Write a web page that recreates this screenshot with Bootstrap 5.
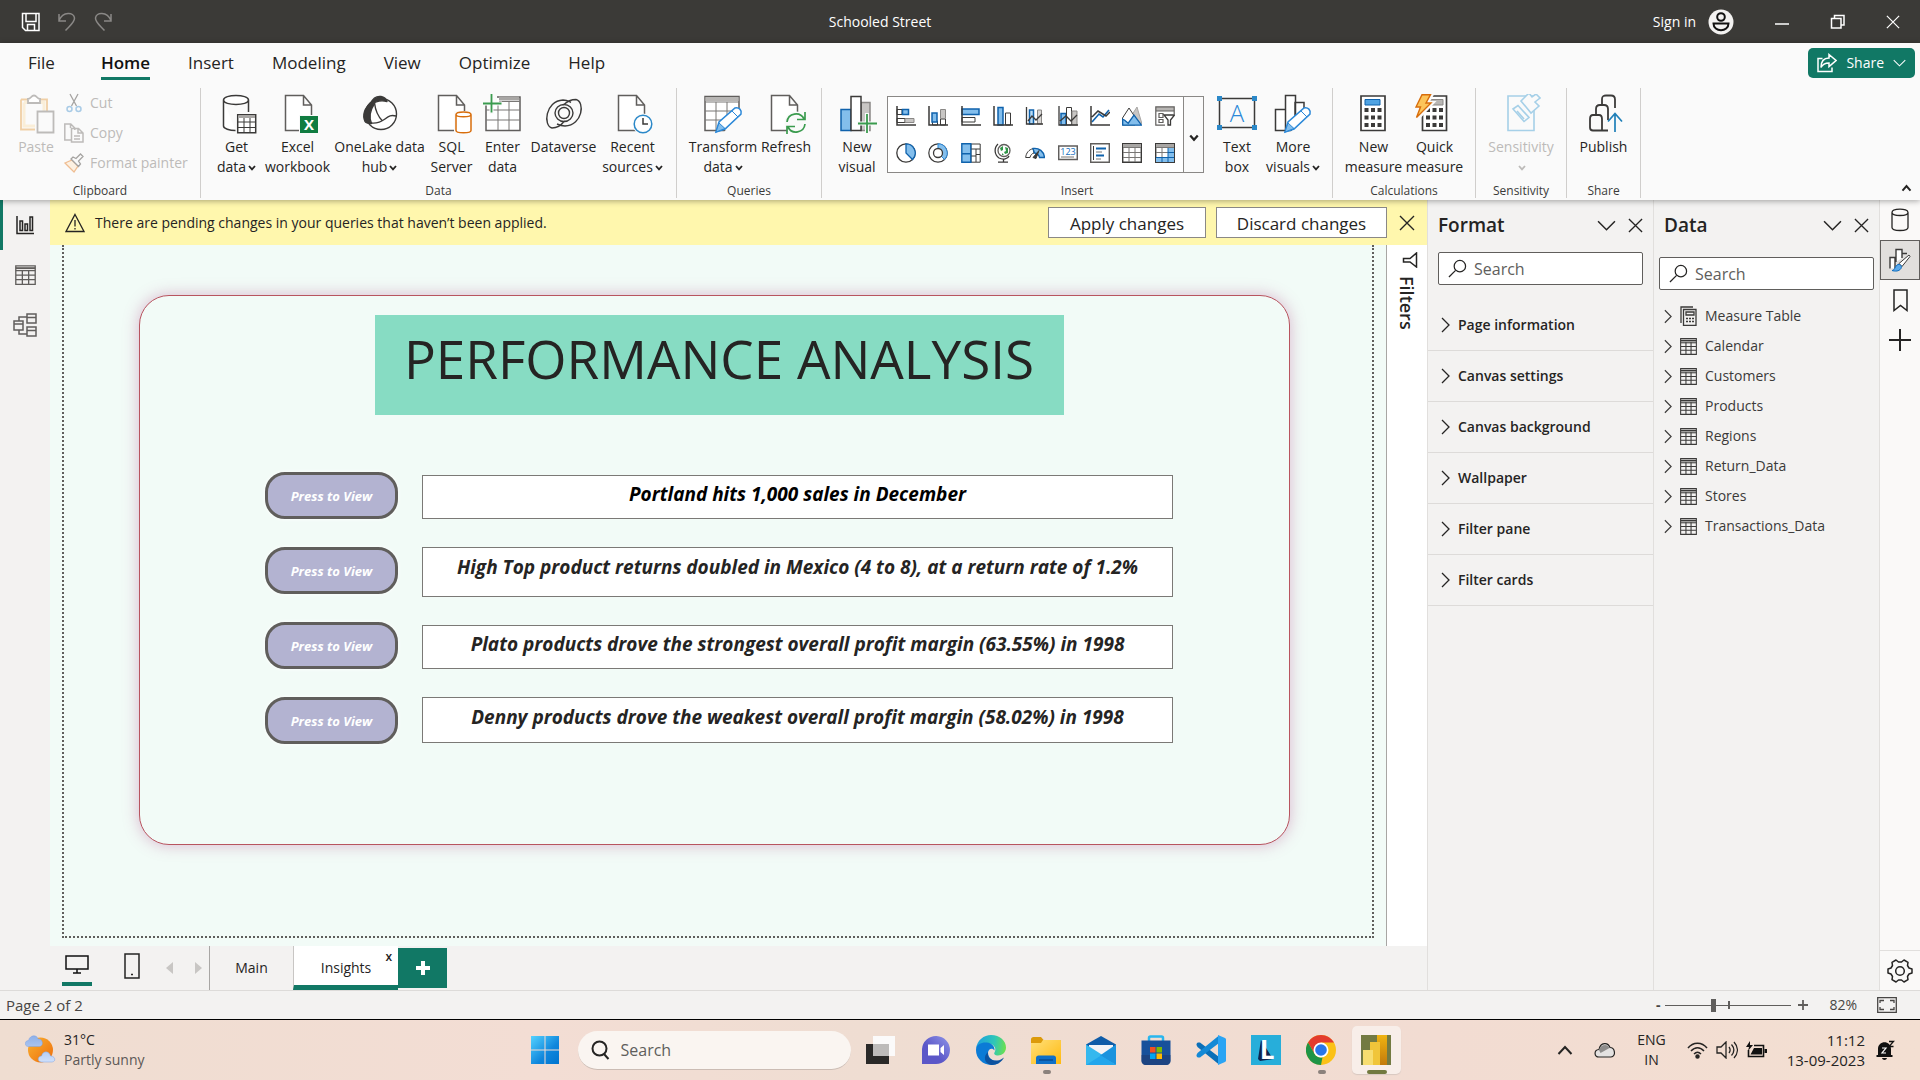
<!DOCTYPE html>
<html lang="en">
<head>
<meta charset="utf-8">
<meta name="viewport" content="width=device-width, initial-scale=1">
<title>Schooled Street</title>
<link href="https://cdn.jsdelivr.net/npm/bootstrap@5.3.0/dist/css/bootstrap.min.css" rel="stylesheet">
<style>
:root{--teal:#117865;--ink:#252423}
body{font-family:"Open Sans","Noto Sans",sans-serif;font-size:14px;line-height:20px;color:var(--ink);background:#f3f2f1;min-height:100vh}
button{color:inherit;background:none;border:0;padding:0}
svg{flex:none;display:block}
.ic{fill:none;stroke:currentColor;stroke-width:1.5}
.thin{stroke-width:1.3}
.heavy{stroke-width:2}
.side-cell{flex:1 1 0}
/* title bar */
.titlebar{height:43px;background:#3b3a37;color:#fff;padding:0 20px 0 21px}
.doc-name{margin-right:161px}
.dim{color:#8a8886}
.win-btn{margin-left:40px}
/* ribbon */
.ribbon{background:#fafafa;box-shadow:0 1px 6px rgba(0,0,0,.35);z-index:2;position:relative}
.tabs-row{height:43px;padding:5px 5px 0 28px;gap:38px}
.rtab{font-size:17px;line-height:24px;color:var(--ink);text-decoration:none;border-bottom:3px solid transparent;padding:3px 0 2px}
.rtab:first-child{margin-right:8px}
.rtab.on{font-weight:600;border-color:var(--teal);color:#111}
.share-btn{background:var(--teal);color:#fff;border-radius:5px;height:30px;padding:0 9px;gap:9px}
.rbody{height:114px}
.rgroup{border-right:1px solid #d0cecc;margin-top:2px;margin-bottom:2px;padding-top:6px}
.glabel{font-size:12px;line-height:15px;color:#3b3a39}
.rbtn{color:var(--ink);text-align:center;line-height:20px;white-space:nowrap}
.rbtn svg{margin:0 auto 3px}
.w46{width:46px}.w52{width:52px}.w56{width:56px}.w61{width:61px}.w66{width:66px}.w72{width:72px}.w74{width:74px}.w98{width:98px}
.g-clip{width:201px}.g-data{width:476px}.g-query{width:145px}.g-insert{width:511px;}.g-calc{width:143px}.g-sens{width:91px}.g-share{width:74px}
.insert-row{padding-left:7px}
.off{color:#bdbbb9}
.clip-cmds{margin-top:-6px}
.small-cmd{height:30px;gap:6px}
.gallery{border:1px solid #8a8886;background:#fff;height:77px;width:317px;margin:2px 1px 0 2px}
.gal-grid{display:grid;grid-template-columns:repeat(9,1fr);flex:1;padding:0 2px}
.gal-grid button{display:grid;place-items:center}
.gal-more{width:20px;border-left:1px solid #8a8886;background:#fafafa;display:grid;place-items:center;padding-top:7px}
.rbtn .caret{display:inline-block;vertical-align:middle;margin:0 0 0 2px}
/* work area */
.leftnav{width:50px;color:#605e5c}
.leftnav button{height:50px;display:grid;place-items:center;border-left:3px solid transparent;padding-right:3px}
.leftnav button.on{border-color:var(--teal);color:#252423}
.notice{height:45px;background:#fff7ad;padding:0 12px 0 15px}
.notice-text{margin:1px auto 0 10px}
.plain-btn{background:#fff;border:1px solid #8a8886;width:158px;height:31px;font-size:17px;line-height:28px;padding:2px 0 0}
.plain-btn.wide{width:171px;margin:0 12px 0 10px}
.canvas-area{background:#f2fbf7;padding:0 12px 8px}
.page-frame{border:2px dotted #605e5c;border-top:0;padding:50px 82px 91px 75px}
.sheet{border:1px solid #b8545f;border-radius:30px;box-shadow:0 0 16px rgba(170,60,130,.35);background:#f2fbf7;padding:19px 116px 0 125px}
.banner{background:#87dcc3;width:689px;height:100px;margin:0 auto 57px;font-size:53px;line-height:88px;font-weight:400;text-align:center;white-space:nowrap}
.insight{height:75px;gap:24px}
.press{width:133px;height:47px;flex:none;border:3px solid #605e5c;border-radius:20px;background:#b3b3d1;color:#fff;font-weight:700;font-style:italic;font-size:13px;box-shadow:0 0 4px #fff}
.fact{flex:1;background:#fff;border:1px solid #7b7976;font-weight:700;font-style:italic;font-size:19px;line-height:37px;text-align:center;height:44px;margin-top:3px;white-space:nowrap}
.fact.tall{height:50px;line-height:39px;margin-top:0}
.fact.raised{height:46px;line-height:39px;margin-top:0}
.filters{width:41px;background:#fff;border-left:1px solid #a8a6a4;padding:7px 0 0 5px}
.filters span{writing-mode:vertical-rl;font-weight:600;font-size:18px;line-height:24px;margin-right:5px}
.pane{width:226px;border-left:1px solid #e1dfdd}
.pane h2{font-size:19px;line-height:26px;font-weight:600;margin:0}
.pane-head{height:50px;padding:0 10px}
.find{background:#fff;border:1px solid #605e5c;border-radius:2px;height:33px;padding:0 9px;gap:7px;margin:2px 10px 15px}
.find.data-find{margin:7px 5px 11px}
.find input,.os-find input{border:0;outline:0;min-width:0;flex:1;background:none;font-size:16px;padding:0;color:var(--ink)}
.find input::placeholder,.os-find input::placeholder{color:#605e5c;opacity:1}
.sec{height:51px;width:100%;border-bottom:1px solid #dddbd9;font-weight:600;padding:0 13px;gap:8px}
.tree button{height:30px;width:100%;padding-left:10px;gap:8px;color:#3b3a39}
.strip{width:41px;background:#faf9f8;border-left:1px solid #e1dfdd}
.strip button{height:40px;width:40px;display:grid;place-items:center}
.strip button.on{background:#e1dfdd;border:1px solid #605e5c}
.strip .gear-cell{border-top:1px solid #e1dfdd}
/* page tabs */
.pagebar{height:44px;padding-left:62px}
.dev{width:30px;height:40px;margin-right:25px}
.dev.on{border-bottom:4px solid var(--teal);color:#111}
.pager{color:#c8c6c4;gap:22px;margin:0 7px 0 -6px}
.ptab{width:84px;line-height:44px;color:var(--ink);text-decoration:none;text-align:center;border-left:1px solid #a8a6a4}
.ptab.on{width:105px;background:#fff;border-left-color:#c8c6c4;border-bottom:5px solid var(--teal);position:relative}
.tab-x{position:absolute;top:3px;right:6px;font-size:12px;line-height:16px;font-weight:600}
.add-page{width:49px;height:40px;background:var(--teal);color:#fff;margin-top:2px;display:grid;place-items:center}
.statusbar{height:29px;border-top:1px solid #dddbd9;color:#484644;padding:0 23px 0 6px}
.page-no{font-size:15px}
.zoom-val{margin:0 20px 0 21px}
.zoomer{appearance:none;width:126px;height:14px;margin:0 7px 0 5px;background:linear-gradient(#605e5c,#605e5c) 63px 50%/2px 8px no-repeat,linear-gradient(#605e5c,#605e5c) center/100% 1px no-repeat}
.zoomer::-webkit-slider-thumb{appearance:none;width:5px;height:13px;background:#605e5c;border:0}
/* taskbar */
.taskbar{height:61px;border-top:1px solid #000;background:linear-gradient(90deg,#efddd1,#f3ddd4 28%,#efddd2 45%,#f2dcd2 75%,#f3dfd2);padding:0 25px}
.muted-ink{color:#5c5856}
.apps{margin-left:13px}
.os-find{width:273px;height:39px;border-radius:20px;background:#faf5f1;border-bottom:1px solid #cbbcb4;padding:0 12px;margin:0 3px 0 18px;gap:11px}
.app{width:55px;height:48px;display:grid;place-items:center;position:relative}
.app.run::after{content:"";position:absolute;bottom:0;left:24px;width:8px;height:4px;border-radius:2px;background:#8b817c}
.app.cur::before{content:"";position:absolute;inset:0 3px;border-radius:5px;background:#f8eee9;box-shadow:0 1px 1px #d8c8c0}
.app.cur::after{left:18px;width:20px;background:#72793f}
.app svg{position:relative}
.tray{gap:8px}
.tray-cloud,.tray-lang{margin:0 13px}
.clock{font-size:15px;margin:0 3px 0 12px}
</style>
</head>
<body class="d-flex flex-column m-0">
<svg width="0" height="0" class="position-absolute" aria-hidden="true">
<defs>
<symbol id="chev" viewBox="0 0 18 10"><path d="M1 1l8 8 8-8" fill="none" stroke="currentColor" stroke-width="1.4"/></symbol>
<symbol id="cross" viewBox="0 0 16 16"><path d="M1 1l14 14M15 1L1 15" fill="none" stroke="currentColor" stroke-width="1.4"/></symbol>
<symbol id="right" viewBox="0 0 9 16"><path d="M1 1l7 7-7 7" fill="none" stroke="currentColor" stroke-width="1.3"/></symbol>
<symbol id="caret" viewBox="0 0 8 6"><path d="M1 1l3 3.4L7 1" fill="none" stroke="currentColor" stroke-width="1.8"/></symbol>
<symbol id="lens" viewBox="0 0 20 20"><g fill="none" stroke="currentColor" stroke-width="1.3"><circle cx="12.5" cy="7.5" r="6"/><path d="M8 12l-7 7"/></g></symbol>
<symbol id="grid" viewBox="0 0 16 16"><g fill="none" stroke="currentColor"><path d="M.6.6h14.8v14.800H.6zM.6 8h14.800M.6 11.600h14.800M5.600 4v11.400M10.400 4v11.400"/><path d="M.6 2.500h14.800" stroke-width="1.500"/><path d="M.6 4.500h14.800"/></g></symbol>
<symbol id="page" viewBox="0 0 40 40"><path d="M7.500 1.500h18l8 9.500v25.500h-26zM25.500 1.500V11h8" fill="#fff" stroke="#605e5c" stroke-width="1.5"/></symbol>
</defs>
</svg>

<header class="titlebar d-flex align-items-center">
  <div class="side-cell d-flex gap-3">
    <button aria-label="Save"><svg width="20" height="20" class="ic"><path d="M1.500 1.500h16.500v17H4.500l-3-3zM5 1.500v8h10v-8M6.500 18.500v-6h7v6"/></svg></button>
    <button class="dim" aria-label="Undo"><svg width="20" height="20" class="ic"><path d="M2 2v7h7M2 8.500C6-1 17 0 17.500 6c.3 4-4 7-9 12.500"/></svg></button>
    <button class="dim" aria-label="Redo"><svg width="20" height="20" class="ic"><path d="M18 2v7h-7M18 8.500C14-1 3 0 2.500 6c-.3 4 4 7 9 12.500"/></svg></button>
  </div>
  <span class="doc-name">Schooled Street</span>
  <div class="side-cell d-flex justify-content-end align-items-center">
    <button class="d-flex align-items-center gap-2 me-n1"><span class="me-1">Sign in</span><svg width="26" height="26"><circle cx="13" cy="13" r="12.500" fill="#f3f2f1"/><g fill="none" stroke="#111" stroke-width="2"><circle cx="13" cy="8" r="3.800"/><path d="M5.500 14.500h15c0 9-15 9-15 0z"/></g></svg></button>
    <button class="win-btn" aria-label="Minimize"><svg width="16" height="16" class="ic"><path d="M1 10h14"/></svg></button>
    <button class="win-btn" aria-label="Restore"><svg width="16" height="16" class="ic"><path d="M1.500 4.500h9.500V14H1.500zM4.500 4V1.500H14V11h-3"/></svg></button>
    <button class="win-btn" aria-label="Close"><svg width="14" height="14"><use href="#cross"/></svg></button>
  </div>
</header>

<section class="ribbon">
  <nav class="tabs-row d-flex align-items-start">
    <a class="rtab" href="#">File</a>
    <a class="rtab on" href="#">Home</a>
    <a class="rtab" href="#">Insert</a>
    <a class="rtab" href="#">Modeling</a>
    <a class="rtab" href="#">View</a>
    <a class="rtab" href="#">Optimize</a>
    <a class="rtab" href="#">Help</a>
    <button class="share-btn ms-auto d-flex align-items-center"><svg width="20" height="20" class="ic"><path d="M5.500 5.500H1v13h14v-4M12 1.500l7 6-7 6v-3.500c-4 0-6.500 1.500-8 4.500 0-6 3-9.500 8-9.500z"/></svg><span>Share</span><svg width="13" height="8" class="ms-n1"><use href="#chev"/></svg></button>
  </nav>
  <div class="rbody d-flex">
    <div class="rgroup g-clip d-flex flex-column">
      <div class="d-flex flex-grow-1 off ps-2">
        <button class="rbtn w56 off align-self-start"><svg width="40" height="40"><g fill="none" stroke-width="1.800"><path d="M5 5.500h26V17M19 35.500H5v-30" stroke="#f0cfa5"/><path d="M8 8.500h20V17M19 32H8V8.500" stroke="#faeed8" stroke-width="3"/><path d="M12 9V5c3 0 3-3.500 6-3.500S21 5 24 5v4z" fill="#fff" stroke="#bdbbb9"/><path d="M21.500 17.500h16v21h-16z" fill="#fafafa" stroke="#bdbbb9"/></g></svg>Paste</button>
        <div class="clip-cmds d-flex flex-column">
          <button class="small-cmd off d-flex align-items-center"><svg width="20" height="20"><path d="M6 1l6.500 12M14 1L7.500 13" stroke="#a5a3a1" stroke-width="1.300"/><g fill="none" stroke="#a9cbe6" stroke-width="1.500"><circle cx="5.500" cy="16" r="2.500"/><circle cx="14.500" cy="16" r="2.500"/></g></svg>Cut</button>
          <button class="small-cmd off d-flex align-items-center"><svg width="20" height="20" class="ic"><path d="M7 17H.8V1h6l4 4v2M6.500 1v4M7.500 5.500h7l4.500 4.500v9H7.500zM14 5.500V10h5M10 13h6M10 16h6"/></svg>Copy</button>
          <button class="small-cmd off d-flex align-items-center"><svg width="20" height="20"><path d="M1 10l7-3 6 6-4 6z" fill="#fdf1e2" stroke="#efbd92" stroke-width="1.300"/><path d="M7 6l7.500 7.500 2-2.500-2-3L19 3.500 16.500 1 12 5.500 9 4z" fill="#fafafa" stroke="#a5a3a1" stroke-width="1.300"/></svg>Format painter</button>
        </div>
      </div>
      <div class="glabel text-center">Clipboard</div>
    </div>

    <div class="rgroup g-data d-flex flex-column">
      <div class="d-flex flex-grow-1 justify-content-center align-items-start">
        <button class="rbtn w56"><svg width="40" height="40"><g fill="#fff" stroke="#3b3a39" stroke-width="1.500"><path d="M6.500 6v26c0 2.500 6 4.500 12 4.500M31.500 6v12M6.500 6c0-6 25-6 25 0s-25 6-25 0z"/><path d="M20.700 20.700h18v18h-18z"/><path d="M20.700 28h18M20.700 33.500h18M27 24v15M33 24v15" stroke-width="1"/><path d="M21.500 22.500h16.500" stroke="#a8a6a4" stroke-width="3"/></g></svg>Get<br>data<svg class="caret" width="8" height="6"><use href="#caret"/></svg></button>
        <button class="rbtn w66"><svg width="40" height="40"><use href="#page"/><path d="M21 21h19v19H21z" fill="#fafafa"/><path d="M22 22h18v17H22z" fill="#107c41"/><text x="31" y="36" font-size="15" font-weight="700" fill="#fff" text-anchor="middle">X</text></svg>Excel<br>workbook</button>
        <button class="rbtn w98"><svg width="40" height="40"><g stroke="#3b3a39" stroke-width="1.400" stroke-linejoin="round"><circle cx="21" cy="20" r="15.500" fill="#fff"/><path d="M11 9C13 4 17 2 21 2.500c3 .5 5 2 6 5-6-1.500-11-.5-16 3z" fill="#3b3a39"/><path d="M11 9c-6 4-9 12-6 18.500 1 2 3 2 6.500 2-3-7-1-14 3-20z" fill="#3b3a39"/><path d="M14.500 9c1 8 3 13 8 18M11 29c5 .5 10-1 14-4 4-3 6-4.500 11-3" fill="none"/></g></svg>OneLake data<br>hub<svg class="caret" width="8" height="6"><use href="#caret"/></svg></button>
        <button class="rbtn w46"><svg width="40" height="40"><use href="#page" x="-1"/><path d="M22 17h18v23H22z" fill="#fafafa"/><path d="M24 20.500v16c0 3 15 3 15 0v-16c0-3.500-15-3.500-15 0 0 3 15 3 15 0" fill="#fff" stroke="#d86d0b" stroke-width="1.500"/></svg>SQL<br>Server</button>
        <button class="rbtn w56"><svg width="40" height="40"><path d="M3 3h34v33.500H3z" fill="#fff" stroke="#605e5c" stroke-width="1.500"/><path d="M16 4.500h20" stroke="#a8a6a4" stroke-width="4"/><path d="M3 16h34M3 26h34M15 8v28M26 8v28M16 7.500h21" stroke="#797775" fill="none"/><path d="M0 0h14v10H0z" fill="#fafafa"/><path d="M8.500 0v20M0 9.500h19" stroke="#fafafa" stroke-width="4"/><path d="M8.500 0v18.500M0 9.500h18.500" stroke="#3a9b4e" stroke-width="1.800"/></svg>Enter<br>data</button>
        <button class="rbtn w66"><svg width="40" height="40"><g fill="none" stroke="#3b3a39" stroke-width="1.400"><circle cx="20" cy="19" r="5.500"/><path d="M20 10.500c-5 0-9 4-9 8.500s4 8.500 9 8.500c-3 4-8 6.500-12 6.500C-1 32 1 7 19 6c4 0 6 1.500 8 2.500"/><path d="M20 27.500c5 0 9-4 9-8.500s-4-8.500-9-8.500c3-3 8-5 12-5C41 7.500 39 31 21 32c-4 0-6-1-8-2"/></g></svg>Dataverse</button>
        <button class="rbtn w72"><svg width="40" height="40"><use href="#page" x="-2"/><circle cx="30" cy="30" r="10.500" fill="#fafafa"/><circle cx="30" cy="30" r="8.800" fill="#fff" stroke="#2b88c8" stroke-width="1.500"/><path d="M30 24v6h5" fill="none" stroke="#3b3a39" stroke-width="1.500"/></svg>Recent<br>sources<svg class="caret" width="8" height="6"><use href="#caret"/></svg></button>
      </div>
      <div class="glabel text-center">Data</div>
    </div>

    <div class="rgroup g-query d-flex flex-column">
      <div class="d-flex flex-grow-1 justify-content-center align-items-start">
        <button class="rbtn w74"><svg width="40" height="40"><path d="M2 2.500h34v34H2z" fill="#fff" stroke="#605e5c" stroke-width="1.500"/><path d="M2.500 5h33" stroke="#b8b6b4" stroke-width="4"/><path d="M2 8h34M2 17h34M2 26h34M13 8v28M24 8v28" stroke="#797775" fill="none"/><path d="M37 14h3v26H20z" fill="#fafafa"/><path d="M13 38l3-10 16-14c4-1 7 2 6 6L22 35z" fill="#fff" stroke="#2b88d8" stroke-width="1.500"/><path d="M13 38l3-9 6 5.500z" fill="#83beec" stroke="#2b88d8"/><path d="M29 17l6 6" stroke="#2b88d8"/></svg>Transform<br>data<svg class="caret" width="8" height="6"><use href="#caret"/></svg></button>
        <button class="rbtn w52"><svg width="40" height="40"><use href="#page" x="-2"/><circle cx="30" cy="29" r="11.500" fill="#fafafa"/><g fill="none" stroke="#3a9b4e" stroke-width="1.700"><path d="M21 28c1-9 13-11 17-3M39 18v7.500h-8M39 30c-1 9-13 11-17 3M21 40v-7.500h8"/></g></svg>Refresh</button>
      </div>
      <div class="glabel text-center">Queries</div>
    </div>

    <div class="rgroup g-insert d-flex flex-column">
      <div class="insert-row d-flex flex-grow-1 align-items-start">
        <button class="rbtn w56"><svg width="40" height="40"><path d="M4 15.500h10v21H4z" fill="#83beec" stroke="#0f62ac" stroke-width="1.500"/><path d="M24 8.500h9v28h-9z" fill="#c8c6c4" stroke="#8a8886" stroke-width="1.500"/><path d="M14 2.500h10v34H14z" fill="#fff" stroke="#3b3a39" stroke-width="1.500"/><path d="M30 19v20M20 29.500h20" stroke="#fafafa" stroke-width="4"/><path d="M30 20v19M21 29.500h19" stroke="#3a9b4e" stroke-width="1.800"/></svg>New<br>visual</button>
        <div class="gallery d-flex">
          <div class="gal-grid">
            <button aria-label="Stacked bar chart"><svg width="20" height="20"><path d="M1 3.500h5v5H1z" fill="#fff" stroke="#3b3a39"/><path d="M6.500 3.500h6v5h-6z" fill="#83beec" stroke="#0f62ac" stroke-width="1.500"/><path d="M1 12.500h8v4H1z" fill="#fff" stroke="#3b3a39"/><path d="M9 12.500h9v4H9z" fill="#c8c6c4" stroke="#8a8886"/><path d="M1 0v19h19" fill="none" stroke="#3b3a39" stroke-width="1.500"/></svg></button>
            <button aria-label="Stacked column chart"><svg width="20" height="20"><path d="M4.500 15h5v4h-5zM12.500 13h5v6h-5z" fill="#fff" stroke="#3b3a39"/><path d="M4 7h5v9H4z" fill="#83beec" stroke="#0f62ac" stroke-width="1.500"/><path d="M12.500 3.500h5v9h-5z" fill="#c8c6c4" stroke="#8a8886"/><path d="M1 0v19h19" fill="none" stroke="#3b3a39" stroke-width="1.500"/></svg></button>
            <button aria-label="Clustered bar chart"><svg width="20" height="20"><path d="M1 3h17v5.500H1z" fill="#83beec" stroke="#0f62ac" stroke-width="1.500"/><path d="M1 11.500h13v4.500H1z" fill="#fff" stroke="#3b3a39"/><path d="M1 0v19h19" fill="none" stroke="#3b3a39" stroke-width="1.500"/></svg></button>
            <button aria-label="Clustered column chart"><svg width="20" height="20"><path d="M5 1.500h5V19H5z" fill="#83beec" stroke="#0f62ac" stroke-width="1.500"/><path d="M12.500 7h5v12h-5z" fill="#fff" stroke="#3b3a39"/><path d="M1 0v19h19" fill="none" stroke="#3b3a39" stroke-width="1.500"/></svg></button>
            <button aria-label="Line and stacked column chart"><svg width="20" height="20"><path d="M4.500 4h4v14h-4z" fill="#b9dbf5" stroke="#0f62ac" stroke-width="1.500"/><path d="M12.500 4h4v14h-4z" fill="#d8d6d4" stroke="#8a8886"/><path d="M1.500 1v17H18M3 15l4-5 4 4 6-6" fill="none" stroke="#3b3a39" stroke-width="1.300"/></svg></button>
            <button aria-label="Line and clustered column chart"><svg width="20" height="20"><path d="M3 7.500h5V19H3z" fill="#83beec" stroke="#0f62ac" stroke-width="1.500"/><path d="M8.500 1.500h5V19h-5z" fill="#fff" stroke="#3b3a39"/><path d="M14 5h5v14h-5z" fill="#c8c6c4" stroke="#8a8886"/><path d="M1 0v19h19M2 15l6-5 5 5 6-6" fill="none" stroke="#3b3a39" stroke-width="1.300"/></svg></button>
            <button aria-label="Line chart"><svg width="20" height="20"><path d="M2 16L9 8l4 3 6-7" fill="none" stroke="#0f62ac" stroke-width="1.600"/><path d="M1 0v19h19M2 11l6-6 8 5 4-4" fill="none" stroke="#3b3a39" stroke-width="1.500"/></svg></button>
            <button aria-label="Area chart"><svg width="20" height="20"><path d="M8 12l7-11 5 17z" fill="#c8c6c4" stroke="#a8a6a4"/><path d="M.5 12L7 2l6 9v8H.5z" fill="#fff" stroke="#3b3a39"/><path d="M.7 19.200v-6l2 1 3.500 3L12 9l7.500 10.200z" fill="#83beec" stroke="#0f62ac" stroke-width="1.300"/></svg></button>
            <button aria-label="Slicer"><svg width="20" height="20"><path d="M1 1h18v18H1z" fill="#fff"/><path d="M1 3h18" stroke="#b8b6b4" stroke-width="4"/><path d="M19.200 8V.8H.8v18.400H10M1 5h18M4 7.500h4v4H4zM4 13.500h4v3H4z" fill="none" stroke="#605e5c" stroke-width="1.200"/><path d="M9 9h10.500l-4 5v5h-2.500v-5z" fill="#fff" stroke="#3b3a39" stroke-width="1.300"/></svg></button>
            <button aria-label="Pie chart"><svg width="20" height="20"><circle cx="10" cy="10" r="9.200" fill="#fff" stroke="#3b3a39" stroke-width="1.300"/><path d="M10 .8a9.200 9.200 0 0 1 6.500 15.700L10 10z" fill="#83beec" stroke="#0f62ac" stroke-width="1.300"/></svg></button>
            <button aria-label="Donut chart"><svg width="20" height="20"><circle cx="10" cy="10" r="9.200" fill="#fff" stroke="#3b3a39" stroke-width="1.200"/><path d="M10 .8a9.200 9.200 0 0 1 6.500 15.700L13 13a4.500 4.500 0 0 0-3-7.500z" fill="#83beec" stroke="#2b88d8"/><circle cx="10" cy="10" r="4.500" fill="#fff" stroke="#3b3a39" stroke-width="1.300"/></svg></button>
            <button aria-label="Treemap"><svg width="20" height="20"><path d="M10 1h9.200v18.200H10zM10 6h9M15 6v13M10 13h5M15 11.500h4" fill="#fff" stroke="#3b3a39"/><path d="M.8.8h9v10h-9zM.8 10.800h9v8.400h-9z" fill="#83beec" stroke="#0f62ac" stroke-width="1.400"/></svg></button>
            <button aria-label="Map"><svg width="20" height="20"><path d="M5 1a9 9 0 0 0 1 14c4 2 9 1 10-2M10.500 15.500V19M5 19.200h10" fill="none" stroke="#3b3a39" stroke-width="1.300"/><circle cx="11" cy="7.500" r="6" fill="#fff" stroke="#605e5c" stroke-width="1.300"/><path d="M7 5l3-2v4l-2 1zM12 4l3 1v5l-3 1-1-2 2-1zM9 10l2 2H9z" fill="#2f9447"/></svg></button>
            <button aria-label="Gauge"><svg width="20" height="20"><path d="M.7 14.500C1 10 4 6.500 8 5.700L9 10c-2 .5-3.500 2-4 4.500z" fill="#fff" stroke="#3b3a39"/><path d="M8 5.500c6-1 11 3 11.500 9h-5c-.5-3-2-4-5-4.500z" fill="#83beec" stroke="#0f62ac" stroke-width="1.300"/><path d="M8 14.500l6-7-3 8z" fill="#3b3a39" stroke="#3b3a39"/></svg></button>
            <button aria-label="Card"><svg width="20" height="20"><path d="M.7 3h18.600v13.500H.7z" fill="#fff" stroke="#605e5c" stroke-width="1.500"/><text x="10" y="12" font-size="9" fill="#0f6cbd" text-anchor="middle">123</text><path d="M3 14h13" stroke="#797775"/></svg></button>
            <button aria-label="Multi-row card"><svg width="20" height="20"><path d="M.7.700h18.600v18.600H.7z" fill="#fff" stroke="#605e5c" stroke-width="1.400"/><path d="M3.500 3v14" stroke="#3b3a39"/><path d="M6 5.500h10M6 12.500h8" stroke="#0f62ac" stroke-width="2.200"/><path d="M6 9h6M6 16h5" stroke="#797775"/></svg></button>
            <button aria-label="Table"><svg width="20" height="20"><path d="M.7.700h18.600v18.600H.7z" fill="#fff" stroke="#3b3a39" stroke-width="1.400"/><path d="M1 2.500h18" stroke="#a8a6a4" stroke-width="3"/><path d="M1 4.500h18M1 9.500h18M1 14.500h18M7 5v14M13 5v14" stroke="#797775"/></svg></button>
            <button aria-label="Matrix"><svg width="20" height="20"><path d="M.7.700h18.600v18.600H.7z" fill="#fff" stroke="#3b3a39" stroke-width="1.400"/><path d="M13 5h6v14H1v-5h12z" fill="#83beec"/><path d="M1 2.500h18" stroke="#a8a6a4" stroke-width="3"/><path d="M1 4.500h18M1 9.500h12M7 5v9" stroke="#797775"/><path d="M13 5v14M13 9.500h6M1 14.500h18M7 14.500V19" stroke="#0f62ac"/></svg></button>
          </div>
          <button class="gal-more" aria-label="More"><svg width="10" height="8" viewBox="0 0 8 6"><use href="#caret"/></svg></button>
        </div>
        <button class="rbtn w56 mx-1 me-0"><svg width="40" height="40"><path d="M2.500 4.500h35v29h-35z" fill="#fafafa" stroke="#3b3a39" stroke-width="1.500"/><path d="M0 2h5v5H0zM35 2h5v5h-5zM0 31h5v5H0zM35 31h5v5h-5z" fill="#2b88c8"/><text x="20" y="28" font-size="24" fill="#2b88d8" text-anchor="middle" font-weight="300">A</text></svg>Text<br>box</button>
        <button class="rbtn w56"><svg width="40" height="40"><g fill="#fff" stroke="#3b3a39" stroke-width="1.500"><path d="M2.500 15.500h10v21h-10zM22 8.500h9v28h-9zM12.500 1.500h10v35h-10z"/></g><path d="M36 12h4v27H17z" fill="#fafafa"/><path d="M12 38l3-10 16-14c4-1 7 2 6 6L21 35z" fill="#fff" stroke="#2b88d8" stroke-width="1.500"/><path d="M12 38l3-9 6 5.500z" fill="#83beec" stroke="#2b88d8"/><path d="M28 17l6 6" stroke="#2b88d8"/></svg>More<br>visuals<svg class="caret" width="8" height="6"><use href="#caret"/></svg></button>
      </div>
      <div class="glabel text-center">Insert</div>
    </div>

    <div class="rgroup g-calc d-flex flex-column">
      <div class="d-flex flex-grow-1 justify-content-center align-items-start">
        <button class="rbtn w61"><svg width="40" height="40"><path d="M7 2h24v34.500H7z" fill="#fff" stroke="#3b3a39" stroke-width="1.700"/><path d="M11 5.500h15v5.500H11z" fill="#4fa3e3" stroke="#0f62ac"/><path d="M10.500 16h17M10.500 23.500h17M10.500 31h17" stroke="#3b3a39" stroke-width="4" stroke-dasharray="4 2.500"/></svg>New<br>measure</button>
        <button class="rbtn w61"><svg width="40" height="40"><path d="M7.500 2h24v34.500h-24z" fill="#fff" stroke="#3b3a39" stroke-width="1.700"/><path d="M16 5.500h12v5.500H14z" fill="#b8b6b4" stroke="#8a8886"/><path d="M11 16h17M11 23.500h17M11 31h17" stroke="#3b3a39" stroke-width="4" stroke-dasharray="4 2.500"/><path d="M7 0h10l-5 9h5L2 25l4-11H1z" fill="#ffc83d" stroke="#fafafa" stroke-width="4"/><path d="M7 .7h8.500L11 9h5L1.500 23.500 5.500 13H1z" fill="#fcc45a" stroke="#d86d0b" stroke-width="1.400"/></svg>Quick<br>measure</button>
      </div>
      <div class="glabel text-center">Calculations</div>
    </div>
    <div class="rgroup g-sens d-flex flex-column">
      <div class="d-flex flex-grow-1 justify-content-center align-items-start">
        <button class="rbtn w74 off"><svg width="40" height="40"><g fill="#fafafa" stroke="#a6d0e8" stroke-width="1.600"><path d="M7 2h26v34.500H7z"/><path d="M12 15l5-3.500 11 12-5 4z"/><path d="M16 17l7 8"/><path d="M24 3l-4 4 10 12 8-7-4-4 5-4-4-4-4 3-3-4z"/></g></svg>Sensitivity<br><svg class="caret" width="8" height="6"><use href="#caret"/></svg></button>
      </div>
      <div class="glabel text-center">Sensitivity</div>
    </div>
    <div class="rgroup g-share d-flex flex-column">
      <div class="d-flex flex-grow-1 justify-content-center align-items-start">
        <button class="rbtn w66"><svg width="40" height="40"><g fill="none" stroke="#3b3a39" stroke-width="1.800"><path d="M18 11V5c0-3 2-3.500 4-3.500h5c3 0 4 1 4 4V14M12 21v-6c0-3 1-4 4-4h4c3 0 4 1 4 4v11M24 36.500H9c-2 0-3-1-3-3V25c0-3 1-4 3-4h6c2 0 3 1 3 4v11.500"/></g><path d="M31 38V20M24 27.500l7-8 7 8" fill="none" stroke="#1f7fb8" stroke-width="1.700"/></svg>Publish</button>
      </div>
      <div class="glabel text-center">Share</div>
    </div>
    <button class="ms-auto align-self-end pb-2 pe-2" aria-label="Collapse ribbon"><svg width="11" height="8" viewBox="0 0 8 6"><path d="M1 5l3-3.400L7 5" fill="none" stroke="#252423" stroke-width="1.500"/></svg></button>
  </div>
</section>

<main class="d-flex flex-grow-1">
  <div class="flex-grow-1 d-flex flex-column">
    <div class="d-flex flex-grow-1">
      <nav class="leftnav d-flex flex-column">
        <button class="on" aria-label="Report view"><svg width="18" height="20" class="ic"><path d="M1 1v17.500h17M4 6h2.500v9.500H4zM9 9h2.500v6.500H9zM14 2h2.500v13.500H14z"/></svg></button>
        <button aria-label="Table view"><svg width="21" height="20" viewBox="0 0 16 16" preserveAspectRatio="none"><use href="#grid"/></svg></button>
        <button aria-label="Model view"><svg width="24" height="24" class="ic"><path d="M1 8h9v9H1zM1 11h9M14 1h9v9h-9zM14 4.500h9M14 14h9v9h-9zM14 17.500h9M6 8V4h8M6 17v4h8"/></svg></button>
      </nav>
      <div class="flex-grow-1 d-flex flex-column">
        <div class="notice d-flex align-items-center">
          <svg width="20" height="20" class="ic thin"><path d="M10 1.500l9 17H1zM10 7v6.500M10 15v1.500"/></svg>
          <span class="notice-text">There are pending changes in your queries that haven’t been applied.</span>
          <button class="plain-btn">Apply changes</button>
          <button class="plain-btn wide">Discard changes</button>
          <button aria-label="Dismiss"><svg width="16" height="16"><use href="#cross"/></svg></button>
        </div>
        <div class="d-flex flex-grow-1">
          <div class="canvas-area flex-grow-1 d-flex">
            <div class="page-frame flex-grow-1 d-flex">
              <article class="sheet flex-grow-1">
                <h1 class="banner">PERFORMANCE ANALYSIS</h1>
                <div class="insight d-flex align-items-start"><button class="press">Press to View</button><div class="fact text-black">Portland hits 1,000 sales in December</div></div>
                <div class="insight d-flex align-items-start"><button class="press">Press to View</button><div class="fact tall">High Top product returns doubled in Mexico (4 to 8), at a return rate of 1.2%</div></div>
                <div class="insight d-flex align-items-start"><button class="press">Press to View</button><div class="fact">Plato products drove the strongest overall profit margin (63.55%) in 1998</div></div>
                <div class="insight d-flex align-items-start"><button class="press">Press to View</button><div class="fact raised">Denny products drove the weakest overall profit margin (58.02%) in 1998</div></div>
              </article>
            </div>
          </div>
          <aside class="filters d-flex flex-column align-items-center">
            <svg width="16" height="16" class="ic mb-2 me-n1"><path d="M14.500 1v14L8 10H1.500V6.500H8z"/></svg>
            <span>Filters</span>
          </aside>
        </div>
      </div>
    </div>
    <nav class="pagebar d-flex">
      <button class="dev on d-flex justify-content-center align-items-center" aria-label="Desktop layout"><svg width="24" height="20" class="ic"><path d="M1 2h22v13H1zM12 15v4M8 19h8"/></svg></button>
      <button class="dev d-flex justify-content-center align-items-center" aria-label="Mobile layout"><svg width="18" height="26" class="ic"><path d="M2 1h14v24H2zM8 21.500h2"/></svg></button>
      <div class="pager d-flex">
        <button aria-label="Previous page"><svg width="7" height="12"><path d="M7 0v12L0 6z" fill="currentColor"/></svg></button>
        <button aria-label="Next page"><svg width="7" height="12"><path d="M0 0v12l7-6z" fill="currentColor"/></svg></button>
      </div>
      <a class="ptab" href="#">Main</a>
      <a class="ptab on" href="#">Insights<span class="tab-x">x</span></a>
      <button class="add-page" aria-label="New page"><svg width="14" height="14"><path d="M7 0v14M0 7h14" stroke="#fff" stroke-width="4"/></svg></button>
    </nav>
  </div>

  <aside class="pane">
    <div class="pane-head d-flex align-items-center"><h2 class="me-auto">Format</h2><button class="me-2 pe-1" aria-label="Collapse"><svg width="19" height="11"><use href="#chev"/></svg></button><button aria-label="Close"><svg width="15" height="15"><use href="#cross"/></svg></button></div>
    <label class="find d-flex align-items-center"><svg width="19" height="19"><use href="#lens"/></svg><input type="text" placeholder="Search" aria-label="Search format"></label>
    <button class="sec d-flex align-items-center"><svg width="9" height="16"><use href="#right"/></svg>Page information</button>
    <button class="sec d-flex align-items-center"><svg width="9" height="16"><use href="#right"/></svg>Canvas settings</button>
    <button class="sec d-flex align-items-center"><svg width="9" height="16"><use href="#right"/></svg>Canvas background</button>
    <button class="sec d-flex align-items-center"><svg width="9" height="16"><use href="#right"/></svg>Wallpaper</button>
    <button class="sec d-flex align-items-center"><svg width="9" height="16"><use href="#right"/></svg>Filter pane</button>
    <button class="sec d-flex align-items-center"><svg width="9" height="16"><use href="#right"/></svg>Filter cards</button>
  </aside>

  <aside class="pane">
    <div class="pane-head d-flex align-items-center"><h2 class="me-auto">Data</h2><button class="me-2 pe-1" aria-label="Collapse"><svg width="19" height="11"><use href="#chev"/></svg></button><button aria-label="Close"><svg width="15" height="15"><use href="#cross"/></svg></button></div>
    <label class="find data-find d-flex align-items-center"><svg width="19" height="19"><use href="#lens"/></svg><input type="text" placeholder="Search" aria-label="Search data"></label>
    <ul class="tree list-unstyled m-0">
      <li><button class="d-flex align-items-center"><svg width="8" height="15"><use href="#right"/></svg><svg width="17" height="20" class="ic thin"><path d="M1 17V1h12M3.500 3.500h12.500v16H3.500zM6 6h8v3H6z"/><path d="M6 12.500h8M6 15.500h8" stroke-dasharray="2 1"/></svg>Measure Table</button></li>
      <li><button class="d-flex align-items-center"><svg width="8" height="15"><use href="#right"/></svg><svg width="17" height="17"><use href="#grid"/></svg>Calendar</button></li>
      <li><button class="d-flex align-items-center"><svg width="8" height="15"><use href="#right"/></svg><svg width="17" height="17"><use href="#grid"/></svg>Customers</button></li>
      <li><button class="d-flex align-items-center"><svg width="8" height="15"><use href="#right"/></svg><svg width="17" height="17"><use href="#grid"/></svg>Products</button></li>
      <li><button class="d-flex align-items-center"><svg width="8" height="15"><use href="#right"/></svg><svg width="17" height="17"><use href="#grid"/></svg>Regions</button></li>
      <li><button class="d-flex align-items-center"><svg width="8" height="15"><use href="#right"/></svg><svg width="17" height="17"><use href="#grid"/></svg>Return_Data</button></li>
      <li><button class="d-flex align-items-center"><svg width="8" height="15"><use href="#right"/></svg><svg width="17" height="17"><use href="#grid"/></svg>Stores</button></li>
      <li><button class="d-flex align-items-center"><svg width="8" height="15"><use href="#right"/></svg><svg width="17" height="17"><use href="#grid"/></svg>Transactions_Data</button></li>
    </ul>
  </aside>

  <nav class="strip d-flex flex-column">
    <button aria-label="Data"><svg width="18" height="24" class="ic thin"><path d="M1 4.500v15c0 4 16 4 16 0v-15c0-4.500-16-4.500-16 0 0 4 16 4 16 0"/></svg></button>
    <button class="on" aria-label="Format"><svg width="22" height="24"><path d="M1 20.500V9.500h5V20M7 14V1.500h6V10M13 5.500h5" fill="#fff" stroke="#3b3a39" stroke-width="1.400"/><path d="M10 15.500L20 7l1 1.500-8 10z" fill="#fff" stroke="#3b3a39"/><path d="M3 22.500c3 0 3-5 6-6 3-.5 4 2 3 4-2 3-6 3-9 2z" fill="#5ba9ea" stroke="#0f6cbd"/></svg></button>
    <button aria-label="Bookmarks"><svg width="15" height="23" class="ic"><path d="M1 1h13v20.500l-6.500-5-6.500 5z"/></svg></button>
    <button class="mb-auto" aria-label="Add pane"><svg width="22" height="22" class="ic heavy"><path d="M11 0v22M0 11h22"/></svg></button>
    <button class="gear-cell" aria-label="Settings"><svg width="26" height="26" class="ic"><path d="M9 2l2.500 2h3L17 2l4 2.300-.5 3.200L22 10l3 1v4l-3 1-1.500 2.500.5 3.200L17 24l-2.500-2h-3L9 24l-4-2.300.5-3.200L4 16l-3-1v-4l3-1 1.500-2.500L5 4.300z" stroke-linejoin="round"/><circle cx="13" cy="13" r="4.300"/></svg></button>
  </nav>
</main>

<footer class="statusbar d-flex align-items-center">
  <span class="page-no me-auto">Page 2 of 2</span>
  <button class="fw-bold" aria-label="Zoom out">-</button>
  <input class="zoomer" type="range" min="10" max="200" value="82" aria-label="Zoom">
  <button aria-label="Zoom in"><svg width="10" height="10"><path d="M5 0v10M0 5h10" stroke="#605e5c" stroke-width="1.800"/></svg></button>
  <span class="zoom-val">82%</span>
  <button aria-label="Fit to page"><svg width="20" height="16" class="ic thin"><path d="M.7.700h18.600v14.600H.7zM3 6V3.500h4M13 3.500h4V6M17 10v2.500h-4M7 12.500H3V10"/></svg></button>
</footer>

<footer class="taskbar d-flex align-items-center">
  <div class="side-cell d-flex align-items-center gap-2">
    <svg width="31" height="30"><defs><linearGradient id="sun" x1="0" y1="0" x2="1" y2="1"><stop offset="0" stop-color="#f9b233"/><stop offset="1" stop-color="#ee6c0a"/></linearGradient><linearGradient id="cl" x1="0" y1="0" x2="0" y2="1"><stop offset="0" stop-color="#8eb0ea"/><stop offset="1" stop-color="#cfe0fb"/></linearGradient></defs><circle cx="15.500" cy="15" r="12.500" fill="url(#sun)"/><path d="M3 11.500C-1 11-.5 5.500 3.500 5.500 5-.5 12-.5 13 4c5-.5 6 7 1.500 7.500zM16 27c-4-.5-3.500-6 .5-6 1.500-6 8-5 9 0 5 0 6 6 1 6z" fill="url(#cl)" stroke="#7fa3e0" stroke-width=".5"/></svg>
    <div><div>31°C</div><div class="muted-ink">Partly sunny</div></div>
  </div>
  <div class="apps d-flex align-items-center">
    <button aria-label="Start"><svg width="30" height="30"><defs><linearGradient id="win" x1="0" y1="0" x2="1" y2="1"><stop offset="0" stop-color="#55d2ff"/><stop offset=".6" stop-color="#0f86dc"/><stop offset="1" stop-color="#0074cf"/></linearGradient></defs><path d="M1 1h13.500v13.500H1zM15.500 1H29v13.500H15.500zM1 15.500h13.500V29H1zM15.500 15.500H29V29H15.500z" fill="url(#win)"/></svg></button>
    <label class="os-find d-flex align-items-center"><svg width="20" height="20"><g fill="none" stroke="#252423" stroke-width="2"><circle cx="9.500" cy="8.500" r="7"/><path d="M14 14l4.500 5"/></g></svg><input type="text" placeholder="Search" aria-label="Search"></label>
    <button class="app" aria-label="Task view"><svg width="30" height="30"><path d="M0 9h23v20H0z" fill="#2a2928"/><path d="M7 1h22v20H7z" fill="#fbfafa"/><path d="M7 9h16v12H7z" fill="#bdbbba"/></svg></button>
    <button class="app" aria-label="Chat"><svg width="30" height="30"><defs><linearGradient id="ch" x1="0" y1="1" x2="1" y2="0"><stop offset=".4" stop-color="#5b57c8"/><stop offset="1" stop-color="#8f95e8"/></linearGradient></defs><path d="M1 29V14a14 14 0 1 1 14 15z" fill="url(#ch)"/><path d="M7 9.500h11v11H7zM19.500 13l3.500-3v10l-3.500-3z" fill="#fff"/></svg></button>
    <button class="app" aria-label="Edge"><svg width="30" height="30"><defs><linearGradient id="e1" x1="0" y1=".4" x2="1" y2=".5"><stop offset="0" stop-color="#1b9fe0"/><stop offset=".6" stop-color="#2fc6b8"/><stop offset="1" stop-color="#6be04f"/></linearGradient></defs><path d="M0 14C1 5 8 0 15 0c9 0 15 6 15 12.500 0 5-4 8-8 8-3 0-4.500-1.500-3.500-3 3-5-2-9-6-9-6 0-11 2-12.500 5.500z" fill="url(#e1)"/><path d="M0 15C0 9 6 7 11 7.500c4 .5 8 3.500 7.500 8-2-3-6-2-6.500 2 0 5 4 8.500 9 8.500l2 2c-3 1.500-5.500 2-8 2A15 15 0 0 1 0 15z" fill="#0b7bd6"/><path d="M12 17c-1 6 4 9 9 8.500 3 0 5-1.500 7-3C26 27 21 30 15.500 30 8 29 7 21 12 17z" fill="#0c529f"/></svg></button>
    <button class="app run" aria-label="File Explorer"><svg width="30" height="30"><defs><linearGradient id="fo" x1="0" y1="0" x2="1" y2="1"><stop offset="0" stop-color="#ffe07a"/><stop offset="1" stop-color="#ffb90f"/></linearGradient></defs><path d="M0 8V4.500C0 3 1 2 2.500 2H10l3 3.500h17V10H0z" fill="#dc9a0a"/><path d="M0 8h10l2-3h16.500c1 0 1.500.5 1.500 1.500V29H0z" fill="url(#fo)"/><path d="M5 29v-6c0-1.500 1-2.500 2.500-2.500h15c1.500 0 2.500 1 2.500 2.500v6z" fill="#0f70c8"/><path d="M8 25h14" stroke="#0a4d94" stroke-width="1.500"/></svg></button>
    <button class="app" aria-label="Mail"><svg width="30" height="30"><path d="M0 9.500L15 1l15 8.500V16H0z" fill="#0f5ca8"/><path d="M3 10h24v8L15 23 3 18z" fill="#f4f4f6"/><path d="M0 9.500L18 21l12 9H0z" fill="#35b8ee"/><path d="M30 9.500L14 20.500 30 30z" fill="#1a93de"/><path d="M0 30l15-9.500L30 30z" fill="#22a6ec"/></svg></button>
    <button class="app" aria-label="Store"><svg width="30" height="30"><path d="M8 7V3c0-1 .5-1.500 1.500-1.500h11c1 0 1.500.5 1.500 1.500v4" fill="none" stroke="#29b6ee" stroke-width="2.500"/><path d="M.5 5.500h29V26c0 2-2 4-4 4h-21c-2 0-4-2-4-4z" fill="#17519b"/><path d="M.5 20h29v6c0 2-2 4-4 4h-21c-2 0-4-2-4-4z" fill="#1f3f77" opacity=".7"/><path d="M9 12h5.500v5.500H9z" fill="#f25022"/><path d="M15.500 12H21v5.500h-5.500z" fill="#7fba00"/><path d="M9 18.500h5.500V24H9z" fill="#00a4ef"/><path d="M15.500 18.500H21V24h-5.500z" fill="#ffb900"/></svg></button>
    <button class="app" aria-label="Visual Studio Code"><svg width="30" height="30"><path d="M1 11c-1-1-.5-3 1-3.500h2L23 22v7.500L1.500 12z" fill="#0a6fb8"/><path d="M1 19c-1 1-.5 3 1 3.500h2L23 8V.5L1.500 18z" fill="#1389d6"/><path d="M22 0l7 3c.5.300 1 1 1 1.500v21c0 .5-.5 1.200-1 1.500l-7 3z" fill="#2aa4f4"/></svg></button>
    <button class="app" aria-label="L"><svg width="30" height="30" class="overflow-visible"><path d="M0 0h30v30H0z" fill="#27aeda"/><path d="M10 5l-3 19 2 2 13-2z" fill="#0c2450"/><text x="16" y="24" font-size="26" font-weight="700" fill="#fff" text-anchor="middle">L</text></svg></button>
    <button class="app run" aria-label="Chrome"><svg width="30" height="30"><circle cx="15" cy="15" r="15" fill="#fbc116"/><path d="M15 0c5.500 0 10.500 3 13 7.500H15L8.500 18.800 2 7.500A15 15 0 0 1 15 0z" fill="#e33b2e"/><path d="M2 7.500l6.500 11.300a7.500 7.500 0 0 0 8 3.500L15 30A15 15 0 0 1 2 7.500z" fill="#1e9446"/><circle cx="15" cy="15" r="7.500" fill="#fff"/><circle cx="15" cy="15" r="5.800" fill="#2a76e8"/></svg></button>
    <button class="app run cur" aria-label="Power BI"><svg width="30" height="30"><defs><linearGradient id="pb" x1="0" y1="0" x2="0" y2="1"><stop offset="0" stop-color="#f0b310"/><stop offset="1" stop-color="#c37a0c"/></linearGradient></defs><path d="M0 0h30v30H0z" fill="#737a42"/><path d="M16 0h10v30H16z" fill="url(#pb)"/><path d="M9 7h10v23H9z" fill="#f0c53a"/><path d="M2 15h10v15H2z" fill="#f7dd70"/></svg></button>
  </div>
  <div class="tray side-cell d-flex align-items-center justify-content-end text-nowrap">
    <button aria-label="Hidden icons"><svg width="16" height="10" class="ic heavy"><path d="M1.500 9l6.500-7 6.500 7"/></svg></button>
    <svg width="22" height="16" class="tray-cloud"><path d="M5 15C0 15-.5 8 5 7.500 6.500 0 14 0 16 5.500c5 0 6.500 9 1 9.500z" fill="#e4e2e1" stroke="#252423" stroke-width="1.200"/><path d="M5 8c1.500-6 9-6.500 10.500-2l-9 5z" fill="#8e8c8b"/></svg>
    <div class="tray-lang text-center ms-0">ENG<br>IN</div>
    <svg width="21" height="18" class="ic"><path d="M1 7c5-6.500 14-6.500 19 0M4 10c4-4.500 9-4.500 13 0M7 13c2.500-2.500 4.500-2.500 7 0"/><circle cx="10.500" cy="15.500" r="1.500" fill="currentColor"/></svg>
    <svg width="22" height="18" class="ic thin"><path d="M1 6h4l5-5v16l-5-5H1zM13 6c1.500 2 1.500 4 0 6M15.500 3.500c3 3.500 3 7.500 0 11M18 1c4.500 5 4.500 11 0 16"/></svg>
    <svg width="21" height="18"><path d="M8 4.500h9.500v11h-15V9" fill="none" stroke="#111" stroke-width="1.600"/><path d="M8 7h8v6.500H4.500z" fill="#111"/><path d="M18.500 8H21v4h-2.500z" fill="#111"/><path d="M4 0L0 6h3L2 10l5-6H4z" fill="#111"/></svg>
    <div class="clock text-end">11:12<br>13-09-2023</div>
    <svg width="19" height="20"><path d="M2 15V9c0-9 13-9 13 0v6h1.500v2H.5v-2z" fill="#111"/><path d="M6 18h5c-.5 2.500-4.500 2.500-5 0z" fill="#111"/><path d="M6 8h4l-4 5h4" fill="none" stroke="#fff" stroke-width="1.200"/><path d="M13 1.500h4.500L13 6.500h4.500" fill="none" stroke="#111" stroke-width="1.300"/></svg>
  </div>
</footer>
<script src="https://cdn.jsdelivr.net/npm/bootstrap@5.3.0/dist/js/bootstrap.bundle.min.js"></script>
</body>
</html>
